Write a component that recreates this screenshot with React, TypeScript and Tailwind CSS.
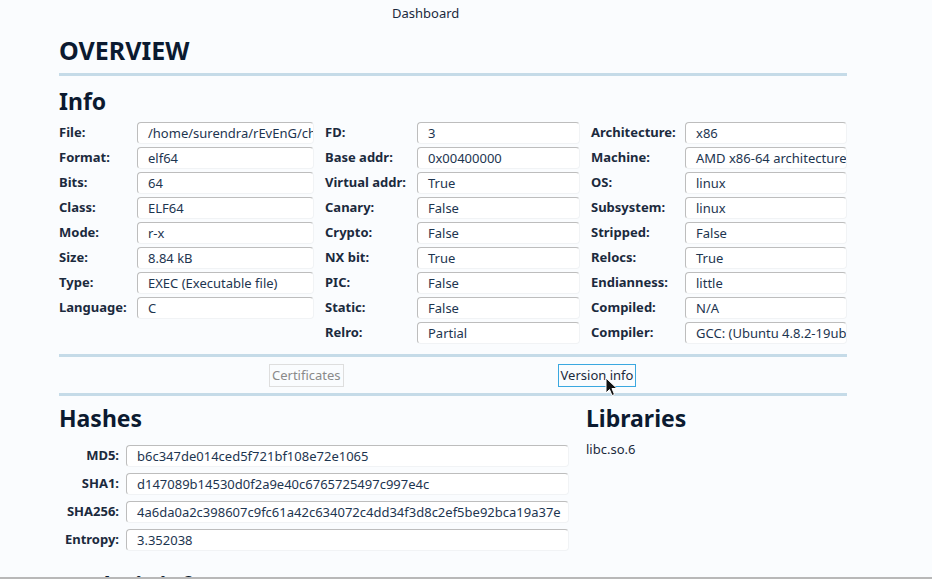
import React from 'react';

type Field = [string, string];

const col1: Field[] = [
  ['File:', '/home/surendra/rEvEnG/challenges/crackme'],
  ['Format:', 'elf64'],
  ['Bits:', '64'],
  ['Class:', 'ELF64'],
  ['Mode:', 'r-x'],
  ['Size:', '8.84 kB'],
  ['Type:', 'EXEC (Executable file)'],
  ['Language:', 'C'],
];

const col2: Field[] = [
  ['FD:', '3'],
  ['Base addr:', '0x00400000'],
  ['Virtual addr:', 'True'],
  ['Canary:', 'False'],
  ['Crypto:', 'False'],
  ['NX bit:', 'True'],
  ['PIC:', 'False'],
  ['Static:', 'False'],
  ['Relro:', 'Partial'],
];

const col3: Field[] = [
  ['Architecture:', 'x86'],
  ['Machine:', 'AMD x86-64 architecture'],
  ['OS:', 'linux'],
  ['Subsystem:', 'linux'],
  ['Stripped:', 'False'],
  ['Relocs:', 'True'],
  ['Endianness:', 'little'],
  ['Compiled:', 'N/A'],
  ['Compiler:', 'GCC: (Ubuntu 4.8.2-19ubuntu1) 4.8.2'],
];

const hashes: Field[] = [
  ['MD5:', 'b6c347de014ced5f721bf108e72e1065'],
  ['SHA1:', 'd147089b14530d0f2a9e40c6765725497c997e4c'],
  ['SHA256:', '4a6da0a2c398607c9fc61a42c634072c4dd34f3d8c2ef5be92bca19a37e'],
  ['Entropy:', '3.352038'],
];

const Value = ({ text }: { text: string }) => (
  <div className="h-[22px] flex-1 min-w-0 overflow-hidden whitespace-nowrap rounded-[4px] border border-[#f1f3f5] border-t-[#bdbdbd] border-l-[#bdbdbd] bg-white pl-[10px] text-[13px] leading-[20px] text-[#1d3550]">
    {text}
  </div>
);

const InfoColumn = ({ rows, labelW }: { rows: Field[]; labelW: string }) => (
  <div className="flex flex-col gap-[3px]">
    {rows.map(([k, v]) => (
      <div key={k} className="flex items-center">
        <div className={`${labelW} shrink-0 text-[13px] font-bold text-[#1b2a3d]`}>{k}</div>
        <Value text={v} />
      </div>
    ))}
  </div>
);

const Cursor = () => (
  <svg className="absolute left-[605px] top-[377px]" width="14" height="20" viewBox="0 0 14 20">
    <path d="M1 1 L1 16 L4.5 12.5 L7 18.5 L9.5 17.5 L7 11.5 L12 11.5 Z" fill="#111" stroke="#fff" strokeWidth="1" />
  </svg>
);

const App: React.FC = () => {
  return (
    <div className="relative flex h-[579px] w-[932px] flex-col overflow-hidden bg-[#fafcfe] font-['Noto_Sans',sans-serif] text-[#0b1a30]">
      <div className="flex-1 overflow-hidden">
        {/* top nav */}
        <div className="flex h-[27px] items-center pl-[392px] text-[13px] text-[#1b2a3d]">Dashboard</div>

        <div className="ml-[59px] w-[788px]">
          <h1 className="h-[46px] pt-[6px] text-[25px] font-bold leading-[34px]">OVERVIEW</h1>
          <div className="h-[3px] bg-[#c5dbe8]" />

          <h2 className="h-[46px] pt-[10px] text-[23px] font-bold leading-[30px]">Info</h2>
          <div className="grid grid-cols-[255px_255px_256px] gap-x-[11px]">
            <InfoColumn rows={col1} labelW="w-[78px]" />
            <InfoColumn rows={col2} labelW="w-[92px]" />
            <InfoColumn rows={col3} labelW="w-[94px]" />
          </div>

          <div className="mt-[10px] h-[3px] bg-[#c5dbe8]" />
          <div className="flex h-[36px] items-center">
            <button className="ml-[210px] h-[23px] border border-[#dedede] px-[2px] text-[13px] leading-[20px] text-[#8a8a8a]">Certificates</button>
            <button className="ml-[214px] h-[23px] border border-[#3aa8e0] px-[2px] text-[13px] leading-[20px] text-[#1b2a3d]">Version info</button>
          </div>
          <div className="h-[3px] bg-[#c5dbe8]" />

          <div className="flex gap-[17px]">
            <div className="w-[510px]">
              <h2 className="h-[49px] pt-[6px] text-[23px] font-bold leading-[32px]">Hashes</h2>
              <div className="flex flex-col gap-[6px]">
                {hashes.map(([k, v]) => (
                  <div key={k} className="flex items-center gap-[7px]">
                    <div className="w-[60px] shrink-0 text-right text-[13px] font-bold text-[#1b2a3d]">{k}</div>
                    <Value text={v} />
                  </div>
                ))}
              </div>
              <h2 className="mt-[18px] text-[23px] font-bold leading-[32px]">Analysis info</h2>
            </div>
            <div className="flex-1">
              <h2 className="h-[44px] pt-[6px] text-[23px] font-bold leading-[32px]">Libraries</h2>
              <div className="text-[13px] text-[#1b2a3d]">libc.so.6</div>
            </div>
          </div>
        </div>
      </div>
      <div className="h-[2px] shrink-0 bg-[#b8b8b8]" />
      <Cursor />
    </div>
  );
};

export default App;
